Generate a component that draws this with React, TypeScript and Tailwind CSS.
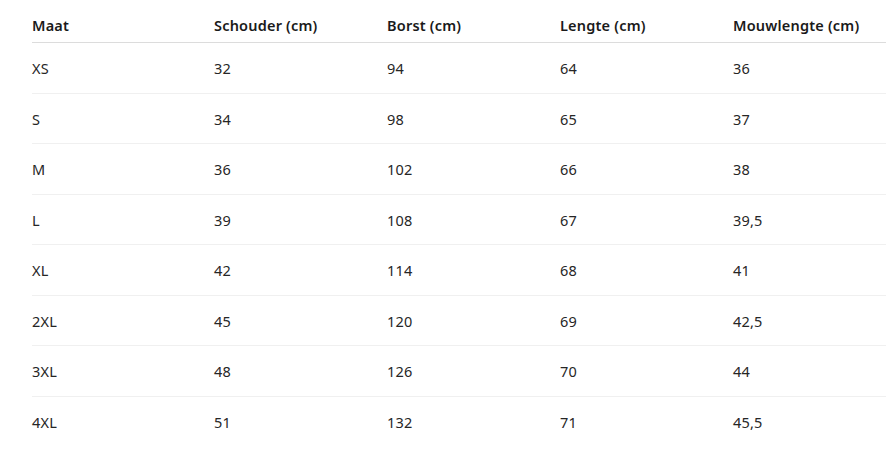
const headers = ['Maat', 'Schouder (cm)', 'Borst (cm)', 'Lengte (cm)', 'Mouwlengte (cm)'];

const rows = [
  ['XS', '32', '94', '64', '36'],
  ['S', '34', '98', '65', '37'],
  ['M', '36', '102', '66', '38'],
  ['L', '39', '108', '67', '39,5'],
  ['XL', '42', '114', '68', '41'],
  ['2XL', '45', '120', '69', '42,5'],
  ['3XL', '48', '126', '70', '44'],
  ['4XL', '51', '132', '71', '45,5'],
];

export default function App() {
  return (
    <div className="min-h-[462px] bg-white pl-8 font-['Noto_Sans',sans-serif] text-[14.5px] leading-5 tracking-[0.2px] text-[#262626]">
      <div className="grid h-[43px] grid-cols-[182px_173px_173px_173px_1fr] border-b border-[#dcdcdc] pt-[15px] font-semibold text-[#1a1a1a]">
        {headers.map((h) => (
          <div key={h}>{h}</div>
        ))}
      </div>
      {rows.map((row) => (
        <div
          key={row[0]}
          className="grid h-[50.5px] grid-cols-[182px_173px_173px_173px_1fr] border-b border-[#f0f0f0] pt-[15px] last:border-b-0"
        >
          {row.map((cell, i) => (
            <div key={i}>{cell}</div>
          ))}
        </div>
      ))}
    </div>
  );
}
